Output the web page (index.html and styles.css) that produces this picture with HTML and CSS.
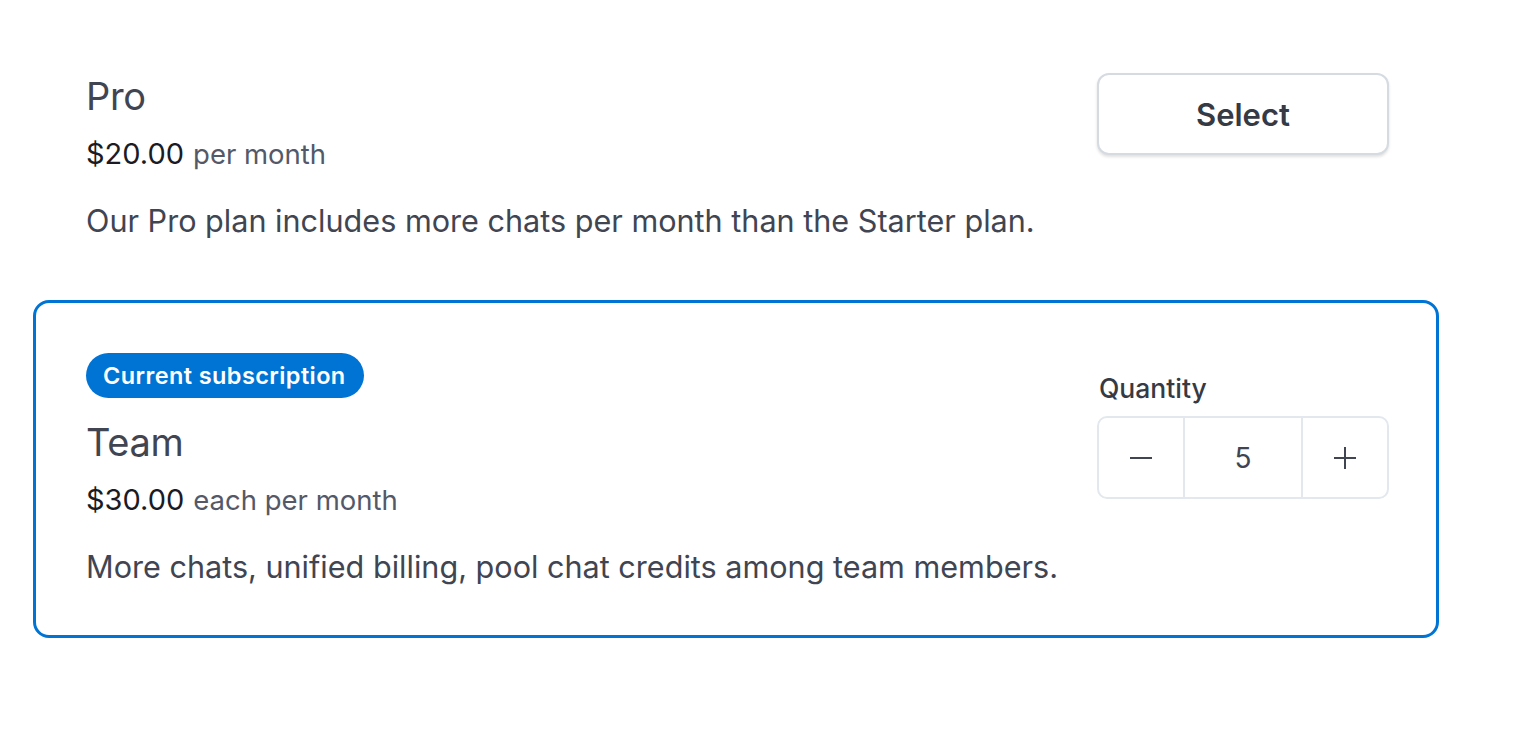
FILE: index.html
```html
<!DOCTYPE html>
<html>
<head>
	<title>Plans</title>
	<link rel="stylesheet" href="styles.css">
</head>
<body>
	<div class="plans">
		<div class="plan">
			<div class="plan-info">
				<div class="plan-name">Pro</div>
				<div class="plan-price"><span class="amount">$20.00</span><span class="period">per month</span></div>
				<p class="plan-desc">Our Pro plan includes more chats per month than the Starter plan.</p>
			</div>
			<div class="plan-action">
				<button class="select-btn">Select</button>
			</div>
		</div>

		<div class="plan current">
			<div class="plan-info">
				<span class="badge">Current subscription</span>
				<div class="plan-name">Team</div>
				<div class="plan-price"><span class="amount">$30.00</span><span class="period">each per month</span></div>
				<p class="plan-desc">More chats, unified billing, pool chat credits among team members.</p>
			</div>
			<div class="plan-action qty-col">
				<label class="qty-label">Quantity</label>
				<div class="stepper">
					<button class="step">
						<svg width="22" height="22" viewBox="0 0 22 22"><path d="M0 11h22" stroke="#414552" stroke-width="2"/></svg>
					</button>
					<div class="qty-value">5</div>
					<button class="step">
						<svg width="22" height="22" viewBox="0 0 22 22"><path d="M0 11h22M11 0v22" stroke="#414552" stroke-width="2"/></svg>
					</button>
				</div>
			</div>
		</div>
	</div>
</body>
</html>
```

FILE: styles.css
```css
body { padding: 0; margin: 0; background: #FFFFFF; font-family: Inter, "Noto Sans", sans-serif; color: #414552; }

.plans { width: 1406px; margin-left: 33px; padding-top: 21px; }

.plan {
display: flex;
justify-content: space-between;
padding: 47px 47px 48px 50px;
border: 3px solid transparent;
border-radius: 16px;
}
.plan + .plan { margin-top: 8px; }
.plan.current { border-color: #0074D4; }

.plan-info { display: flex; flex-direction: column; align-items: flex-start; padding-top: 3px; }
.plan-name { font-size: 38px; line-height: 44px; color: #414552; letter-spacing: -0.3px; }
.plan-price { display: flex; align-items: baseline; margin-top: 18px; line-height: 36px; }
.plan-price .amount { font-size: 29px; color: #1A1B25; margin-right: 9px; }
.plan-price .period { font-size: 27.5px; color: #545969; }
.plan-desc { margin: 29px 0 0; font-size: 30.6px; line-height: 40px; color: #414552; }

.badge {
background: #0074D4;
color: #FFFFFF;
font-size: 23.5px;
font-weight: 600;
letter-spacing: 0.4px;
line-height: 45px;
padding: 0 18px 0 17px;
border-radius: 23px;
margin-bottom: 22px;
}

.plan-action { width: 292px; }
.select-btn {
width: 292px;
height: 82px;
margin-top: 2px;
background: #FFFFFF;
border: 2px solid #D5DBE1;
border-radius: 12px;
box-shadow: 0 2px 3px rgba(0,0,0,0.12);
font-family: inherit;
font-size: 31px;
font-weight: 600;
color: #353A44;
}

.qty-col { padding-top: 22px; }
.qty-label { display: block; font-size: 26.5px; font-weight: 500; line-height: 32px; margin: 0 0 12px 2px; color: #353A44; }
.stepper {
display: flex;
height: 83px;
border: 2px solid #E3E8EE;
border-radius: 10px;
box-sizing: border-box;
}
.step { width: 84px; border: 0; background: none; display: flex; align-items: center; justify-content: center; padding: 0; }
.qty-value {
flex: 1;
border-left: 2px solid #E3E8EE;
border-right: 2px solid #E3E8EE;
display: flex;
align-items: center;
justify-content: center;
font-size: 28px;
color: #414552;
}
```
